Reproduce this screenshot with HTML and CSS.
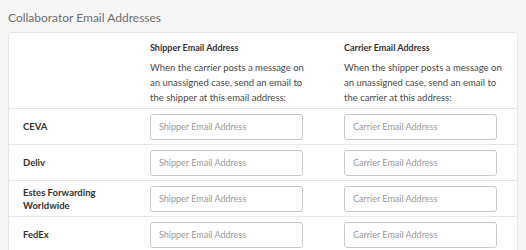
FILE: index.html
```html
<!DOCTYPE html>
<html>
<head>
<meta charset="utf-8">
<link rel="stylesheet" href="styles.css">
</head>
<body>
<h2 class="title">Collaborator Email Addresses</h2>
<div class="card">
  <div class="grid head">
    <div></div>
    <div class="col-head">
      <div class="col-title">Shipper Email Address</div>
      <p class="col-desc">When the carrier posts a message on an unassigned case, send an email to the shipper at this email address:</p>
    </div>
    <div class="col-head">
      <div class="col-title">Carrier Email Address</div>
      <p class="col-desc">When the shipper posts a message on an unassigned case, send an email to the carrier at this address:</p>
    </div>
  </div>
  <div class="grid row">
    <div class="name">CEVA</div>
    <input class="field" placeholder="Shipper Email Address">
    <input class="field" placeholder="Carrier Email Address">
  </div>
  <div class="grid row">
    <div class="name">Deliv</div>
    <input class="field" placeholder="Shipper Email Address">
    <input class="field" placeholder="Carrier Email Address">
  </div>
  <div class="grid row">
    <div class="name">Estes Forwarding Worldwide</div>
    <input class="field" placeholder="Shipper Email Address">
    <input class="field" placeholder="Carrier Email Address">
  </div>
  <div class="grid row">
    <div class="name">FedEx</div>
    <input class="field" placeholder="Shipper Email Address">
    <input class="field" placeholder="Carrier Email Address">
  </div>
</div>
</body>
</html>
```

FILE: styles.css
```css
html, body {
  margin: 0;
  padding: 0;
  background: #f6f6f6;
  font-family: Lato, "Open Sans", sans-serif;
}
body {
  padding: 10px 8px 0 8px;
}
.title {
  margin: 0 0 6px 0;
  font-size: 12px;
  line-height: 16px;
  font-weight: 400;
  color: #6e6e6e;
}
.card {
  background: #fff;
  border: 1px solid #e6e6e6;
  border-radius: 3px;
  box-sizing: border-box;
  width: 510px;
}
.grid {
  display: grid;
  grid-template-columns: 141px 194px 1fr;
  align-items: center;
}
.head {
  align-items: start;
  padding: 7px 0 3px 0;
  border-bottom: 1px solid #e6e6e6;
}
.col-title {
  font-size: 9px;
  font-weight: 700;
  color: #333;
  line-height: 15px;
}
.col-desc {
  margin: 5px 0 0 0;
  font-size: 9.5px;
  line-height: 15px;
  color: #4a4a4a;
  max-width: 166px;
}
.row {
  height: 35px;
  border-bottom: 1px solid #e6e6e6;
}
.name {
  padding-left: 14px;
  padding-right: 20px;
  font-size: 9.5px;
  font-weight: 700;
  color: #333;
  line-height: 13px;
}
.field {
  width: 153px;
  height: 26px;
  box-sizing: border-box;
  border: 1px solid #c9c9c9;
  border-radius: 3px;
  padding: 0 0 0 8px;
  font-family: Lato, "Open Sans", sans-serif;
  font-size: 9px;
  color: #333;
  background: #fff;
}
.field::placeholder {
  color: #9a9a9a;
}
```
